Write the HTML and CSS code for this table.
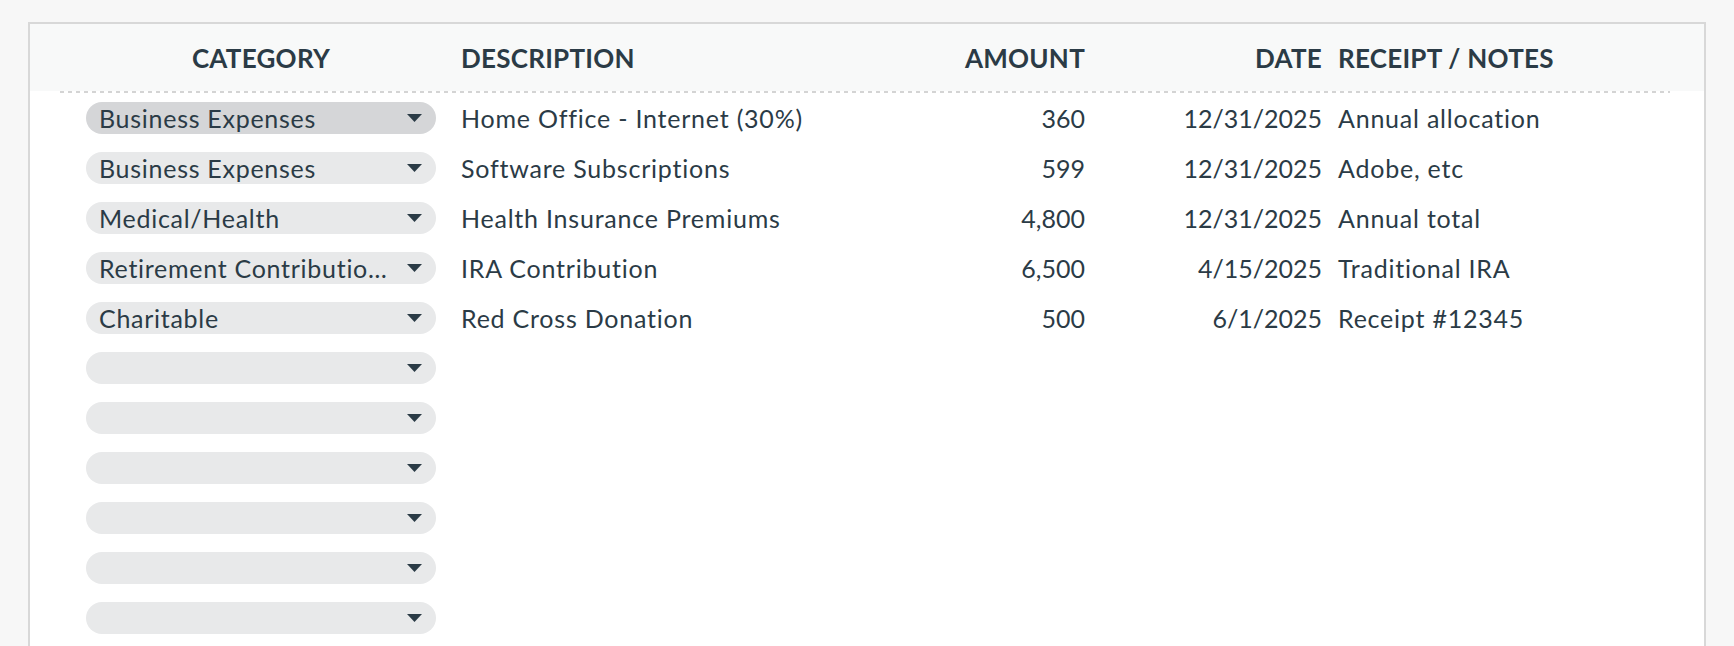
FILE: index.html
```html
<!DOCTYPE html>
<html lang="en">
<head>
<meta charset="utf-8">
<title>Deductions</title>
<link rel="stylesheet" href="styles.css">
</head>
<body>
<div class="panel">
  <div class="head-band">
    <div class="grid head">
      <div class="cell cat-h">CATEGORY</div>
      <div class="cell">DESCRIPTION</div>
      <div class="cell right">AMOUNT</div>
      <div class="cell right">DATE</div>
      <div class="cell">RECEIPT / NOTES</div>
    </div>
  </div>
  <div class="divider"></div>
  <div class="body">
    <div class="grid row">
      <div class="cell cat"><div class="pill active"><span class="pill-text">Business Expenses</span><svg class="caret" width="15" height="8" viewBox="0 0 15 8"><polygon points="0,0 15,0 7.5,8"/></svg></div></div>
      <div class="cell text">Home Office - Internet (30%)</div>
      <div class="cell num">360</div>
      <div class="cell num">12/31/2025</div>
      <div class="cell text">Annual allocation</div>
    </div>
    <div class="grid row">
      <div class="cell cat"><div class="pill"><span class="pill-text">Business Expenses</span><svg class="caret" width="15" height="8" viewBox="0 0 15 8"><polygon points="0,0 15,0 7.5,8"/></svg></div></div>
      <div class="cell text">Software Subscriptions</div>
      <div class="cell num">599</div>
      <div class="cell num">12/31/2025</div>
      <div class="cell text">Adobe, etc</div>
    </div>
    <div class="grid row">
      <div class="cell cat"><div class="pill"><span class="pill-text">Medical/Health</span><svg class="caret" width="15" height="8" viewBox="0 0 15 8"><polygon points="0,0 15,0 7.5,8"/></svg></div></div>
      <div class="cell text">Health Insurance Premiums</div>
      <div class="cell num">4,800</div>
      <div class="cell num">12/31/2025</div>
      <div class="cell text">Annual total</div>
    </div>
    <div class="grid row">
      <div class="cell cat"><div class="pill"><span class="pill-text">Retirement Contributions</span><svg class="caret" width="15" height="8" viewBox="0 0 15 8"><polygon points="0,0 15,0 7.5,8"/></svg></div></div>
      <div class="cell text">IRA Contribution</div>
      <div class="cell num">6,500</div>
      <div class="cell num">4/15/2025</div>
      <div class="cell text">Traditional IRA</div>
    </div>
    <div class="grid row">
      <div class="cell cat"><div class="pill"><span class="pill-text">Charitable</span><svg class="caret" width="15" height="8" viewBox="0 0 15 8"><polygon points="0,0 15,0 7.5,8"/></svg></div></div>
      <div class="cell text">Red Cross Donation</div>
      <div class="cell num">500</div>
      <div class="cell num">6/1/2025</div>
      <div class="cell text">Receipt #12345</div>
    </div>
    <div class="grid row">
      <div class="cell cat"><div class="pill"><span class="pill-text"></span><svg class="caret" width="15" height="8" viewBox="0 0 15 8"><polygon points="0,0 15,0 7.5,8"/></svg></div></div>
      <div class="cell"></div><div class="cell"></div><div class="cell"></div><div class="cell"></div>
    </div>
    <div class="grid row">
      <div class="cell cat"><div class="pill"><span class="pill-text"></span><svg class="caret" width="15" height="8" viewBox="0 0 15 8"><polygon points="0,0 15,0 7.5,8"/></svg></div></div>
      <div class="cell"></div><div class="cell"></div><div class="cell"></div><div class="cell"></div>
    </div>
    <div class="grid row">
      <div class="cell cat"><div class="pill"><span class="pill-text"></span><svg class="caret" width="15" height="8" viewBox="0 0 15 8"><polygon points="0,0 15,0 7.5,8"/></svg></div></div>
      <div class="cell"></div><div class="cell"></div><div class="cell"></div><div class="cell"></div>
    </div>
    <div class="grid row">
      <div class="cell cat"><div class="pill"><span class="pill-text"></span><svg class="caret" width="15" height="8" viewBox="0 0 15 8"><polygon points="0,0 15,0 7.5,8"/></svg></div></div>
      <div class="cell"></div><div class="cell"></div><div class="cell"></div><div class="cell"></div>
    </div>
    <div class="grid row">
      <div class="cell cat"><div class="pill"><span class="pill-text"></span><svg class="caret" width="15" height="8" viewBox="0 0 15 8"><polygon points="0,0 15,0 7.5,8"/></svg></div></div>
      <div class="cell"></div><div class="cell"></div><div class="cell"></div><div class="cell"></div>
    </div>
    <div class="grid row">
      <div class="cell cat"><div class="pill"><span class="pill-text"></span><svg class="caret" width="15" height="8" viewBox="0 0 15 8"><polygon points="0,0 15,0 7.5,8"/></svg></div></div>
      <div class="cell"></div><div class="cell"></div><div class="cell"></div><div class="cell"></div>
    </div>
  </div>
</div>
</body>
</html>
```

FILE: styles.css
```css
html, body {
  margin: 0;
  padding: 0;
}
body {
  background: #f7f7f7;
  font-family: Lato, "Open Sans", sans-serif;
  color: #2b3b46;
  height: 646px;
  overflow: hidden;
  padding: 22px 28px 0 28px;
  box-sizing: border-box;
}
.panel {
  background: #ffffff;
  border: 2px solid #d8d8d8;
  border-bottom: none;
  height: 700px;
}
.head-band {
  background: #f8f9f9;
  height: 67px;
  padding-left: 30px;
  display: flex;
  align-items: center;
}
.grid {
  display: grid;
  grid-template-columns: 393px 447px 193px 237px 340px;
  width: 1610px;
}
.head {
  font-weight: 700;
  font-size: 26px;
  letter-spacing: 0.25px;
  align-items: center;
}
.divider {
  margin-left: 30px;
  width: 1610px;
  height: 2px;
  background: repeating-linear-gradient(90deg, #d4d4d4 0 4px, transparent 4px 8px);
}
.body {
  padding-left: 30px;
}
.row {
  height: 50px;
  align-items: center;
  font-size: 25px;
}
.cell {
  padding: 0 8px;
  white-space: nowrap;
  overflow: hidden;
}
.head .right {
  text-align: right;
}
.text {
  letter-spacing: 0.78px;
}
.num {
  text-align: right;
  letter-spacing: 0;
}
.cat-h {
  padding: 0 17px 0 26px;
  text-align: center;
}
.cat {
  padding: 0 17px 0 26px;
  overflow: visible;
}
.pill {
  width: 350px;
  height: 32px;
  border-radius: 16px;
  background: #e8e9ea;
  display: flex;
  align-items: center;
  padding: 0 14px 0 13px;
  box-sizing: border-box;
  font-size: 25px;
  letter-spacing: 0.72px;
}
.pill.active {
  background: #d5d6d8;
}
.pill-text {
  flex: 1;
  min-width: 0;
  overflow: hidden;
  text-overflow: ellipsis;
  white-space: nowrap;
  margin-right: 17px;
}
.caret {
  flex: none;
  fill: #2b3b46;
}
```
